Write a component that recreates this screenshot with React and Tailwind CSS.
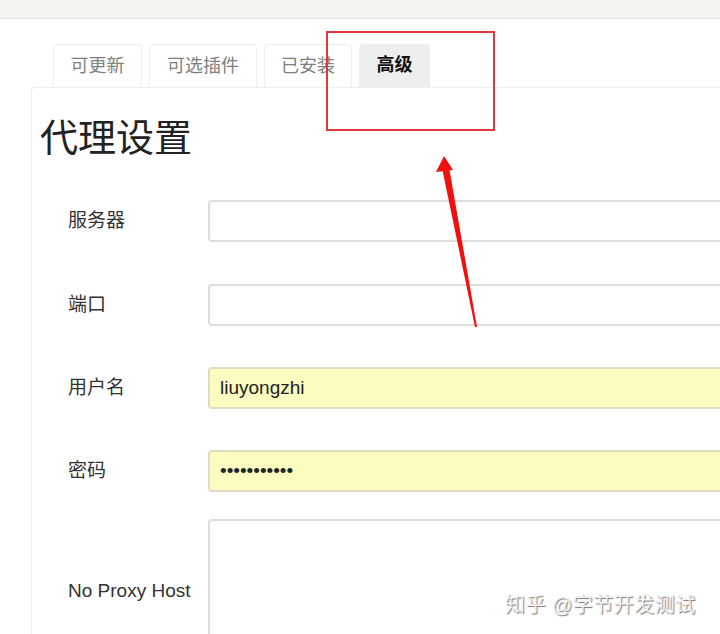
const tabs = [
  { label: "可更新", w: "w-[89px]" },
  { label: "可选插件", w: "w-[108px]" },
  { label: "已安装", w: "w-[88px]" },
];

const fields = [
  { label: "服务器", value: "", filled: false, mt: "mt-[39px]" },
  { label: "端口", value: "", filled: false, mt: "mt-[42px]" },
  { label: "用户名", value: "liuyongzhi", filled: true, mt: "mt-[41px]" },
  { label: "密码", value: "•••••••••••", filled: true, mt: "mt-[41px]" },
];

const App = () => {
  return (
    <div className="relative w-[720px] h-[634px] overflow-hidden bg-white font-['Liberation_Sans','Noto_Sans_CJK_SC',sans-serif] text-[#333]">
      <div className="h-[19px] bg-[#f4f5ef] border-b border-[#e3e4df]" />

      {/* tabs */}
      <div className="flex pl-[53px] pt-[25px] gap-[7px]">
        {tabs.map((tab) => (
          <div
            key={tab.label}
            className={`${tab.w} h-[43px] flex items-center justify-center border border-b-0 border-[#eeeeee] rounded-t-[4px] text-[18px] text-[#808080]`}
          >
            {tab.label}
          </div>
        ))}
        <div className="w-[71px] h-[43px] flex items-center justify-center bg-[#eeeeee] rounded-t-[4px] text-[18px] font-bold text-[#111]">
          高级
        </div>
      </div>

      {/* panel */}
      <div className="ml-[31px] border-l border-t border-[#eeeeee] rounded-tl-[4px] h-[600px]">
        <h1 className="mt-[27px] ml-[8px] h-[46px] leading-[46px] text-[38px] font-normal text-[#222] font-['Liberation_Serif','Noto_Sans_CJK_SC',serif]">
          代理设置
        </h1>

        {fields.map((f) => (
          <div key={f.label} className={`${f.mt} flex items-center h-[42px]`}>
            <div className="w-[176px] shrink-0 pl-[36px] text-[19px] text-[#333]">{f.label}</div>
            <div
              className={`w-[600px] shrink-0 h-[42px] flex items-center pl-[10px] rounded-[4px] border-2 ${
                f.filled ? "bg-[#fafcc0] border-[#dcdcc4]" : "bg-white border-[#dddddd]"
              } text-[19px] text-[#222]`}
            >
              {f.value}
            </div>
          </div>
        ))}

        <div className="mt-[27px] flex items-center">
          <div className="w-[176px] shrink-0 pl-[36px] text-[19px] text-[#333] whitespace-nowrap">No Proxy Host</div>
          <div className="w-[600px] shrink-0 h-[144px] rounded-[4px] border-2 border-[#dddddd] bg-white" />
        </div>
      </div>

      {/* annotation */}
      <div className="absolute left-[326px] top-[31px] w-[169px] h-[100px] border-2 border-[#e2373a]" />
      <svg className="absolute left-0 top-0" width="720" height="634" viewBox="0 0 720 634">
        <polygon points="442,168 449,167 477,327 475,327" fill="#f01010" />
        <polygon points="444,156 453,170 436,172" fill="#f01010" />
      </svg>

      <div className="absolute left-[505px] top-[590px] text-[20px] text-[#f2f2f2] [text-shadow:1px_1px_1px_#777] tracking-[0.5px]">
        知乎 @字节开发测试
      </div>
    </div>
  );
};

export default App;
